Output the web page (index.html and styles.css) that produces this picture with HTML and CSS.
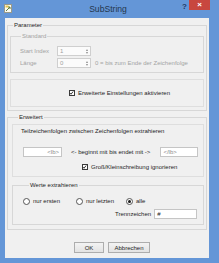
FILE: index.html
```html
<!DOCTYPE html>
<html>
<head>
<meta charset="utf-8">
<link rel="stylesheet" href="styles.css">
</head>
<body>
<div class="win">
  <div class="titlebar">
    <svg class="appicon" width="8" height="9" viewBox="0 0 8 9">
      <rect x="0.5" y="0.5" width="7" height="8" fill="#fbfbf2" stroke="#9a9a8a"/>
      <rect x="1.5" y="1.5" width="3" height="2" fill="#e9c44a"/>
      <path d="M2 7 L6 3 M4 3 H6 V5" stroke="#5f7f3a" stroke-width="1" fill="none"/>
    </svg>
    <div class="title">SubString</div>
    <div class="help">?</div>
    <div class="close">×</div>
  </div>
  <div class="client">
    <fieldset class="gb param">
      <legend>Parameter</legend>
      <fieldset class="gb std">
        <legend class="dis">Standard</legend>
        <div class="frow">
          <span class="flabel dis">Start Index</span>
          <span class="spin"><span class="val">1</span><span class="arrows"><i class="up"></i><i class="dn"></i></span></span>
        </div>
        <div class="frow r2">
          <span class="flabel dis">Länge</span>
          <span class="spin"><span class="val">0</span><span class="arrows"><i class="up"></i><i class="dn"></i></span></span>
          <span class="hint dis">0 = bis zum Ende der Zeichenfolge</span>
        </div>
      </fieldset>
      <div class="panel chkpanel">
        <span class="chk"><svg width="6" height="6" viewBox="0 0 6 6"><path d="M1 3 L2.4 4.5 L5 1.2" stroke="#222" stroke-width="1.1" fill="none"/></svg></span>
        <span>Erweiterte Einstellungen aktivieren</span>
      </div>
    </fieldset>
    <fieldset class="gb ext">
      <legend>Erweitert</legend>
      <div class="panel sub">
        <div class="subtitle">Teilzeichenfolgen zwischen Zeichenfolgen extrahieren</div>
        <div class="lbrow">
          <span class="tb lb1">&lt;lb&gt;</span>
          <span class="mid">&lt;- beginnt mit bis endet mit -&gt;</span>
          <span class="tb lb2">&lt;/lb&gt;</span>
        </div>
        <div class="gkrow">
          <span class="chk"><svg width="6" height="6" viewBox="0 0 6 6"><path d="M1 3 L2.4 4.5 L5 1.2" stroke="#222" stroke-width="1.1" fill="none"/></svg></span>
          <span>Groß/Kleinschreibung ignorieren</span>
        </div>
      </div>
      <fieldset class="gb werte">
        <legend>Werte extrahieren</legend>
        <div class="radios">
          <span class="ritem"><span class="radio"></span>nur ersten</span>
          <span class="ritem"><span class="radio"></span>nur letzten</span>
          <span class="ritem"><span class="radio on"></span>alle</span>
        </div>
        <div class="trow">
          <span>Trennzeichen</span>
          <span class="tb tz">#</span>
        </div>
      </fieldset>
    </fieldset>
    <div class="buttons">
      <span class="btn ok">OK</span>
      <span class="btn cancel">Abbrechen</span>
    </div>
  </div>
</div>
</body>
</html>
```
FILE: styles.css
```css
* { box-sizing: border-box; }
html, body { margin: 0; padding: 0; }
body {
  width: 219px; height: 263px; overflow: hidden;
  background: #6496d7;
  font-family: "Liberation Sans", Arial, sans-serif;
  font-size: 6px; line-height: 8px; color: #1e1e1e;
}
.win {
  width: 219px; height: 263px;
  display: flex; flex-direction: column;
  padding: 0 10px 5px 5px;
}
.titlebar {
  height: 18px; margin: 0 -10px 0 -5px;
  display: flex; align-items: flex-start;
}
.appicon { margin: 4px 0 0 4px; flex: none; }
.title {
  flex: 1; text-align: center; padding-left: 24px;
  font-size: 8.6px; line-height: 10px; margin-top: 4px;
  color: #24364d;
}
.help {
  width: 9px; font-size: 8px; font-weight: bold; line-height: 10px;
  color: #1d3a63; margin-top: 2px; text-align: center;
}
.close {
  width: 21px; height: 10px; margin: 0 9px 0 0;
  background: #c8473f; color: #fff; font-weight: bold;
  font-size: 8px; line-height: 10px; text-align: center;
}
.client {
  flex: 1; background: #f0f0f0;
  display: flex; flex-direction: column;
  padding: 3px 2px 0 2px;
}
.gb {
  margin: 0; min-width: 0;
  border: 1px solid #d7d7d7;
}
.gb > legend { padding: 0 1px; line-height: 8px; }
.dis { color: #a3a3a3; }
.param { padding: 3px 2px 3px 2px; }
.param > legend { margin-left: 3px; }
.std { padding: 6px 8px 4px 9px; }
.std > legend { margin-left: 1px; }
.frow { display: flex; align-items: center; height: 10px; }
.frow.r2 { margin-top: 2px; }
.flabel { width: 37px; }
.spin {
  width: 34px; height: 10px; border: 1px solid #cfcfcf; background: #fbfbfb;
  display: flex; align-items: center; justify-content: space-between;
  padding: 0 1px 0 2px; color: #a0a0a0;
}
.arrows { display: flex; flex-direction: column; gap: 1px; width: 5px; align-items: center; }
.arrows i { display: block; width: 0; height: 0; border-left: 1.5px solid transparent; border-right: 1.5px solid transparent; }
.arrows .up { border-bottom: 2px solid #8a8a8a; }
.arrows .dn { border-top: 2px solid #8a8a8a; }
.hint { margin-left: 4px; }
.panel { border: 1px solid #dedede; }
.chkpanel {
  margin-top: 6px; height: 28px;
  display: flex; align-items: center; gap: 3px;
  padding-left: 58px;
}
.chk {
  width: 6px; height: 6px; border: 1px solid #3a3a3a; background: #fff;
  display: inline-flex; flex: none; position: relative;
}
.chk svg { margin: -1px 0 0 -1px; }
.ext { margin-top: 2px; padding: 3px 2px 4px 4px; }
.ext > legend { margin-left: 6px; }
.sub { padding: 2px 3px 5px 8px; }
.lbrow { display: flex; align-items: center; margin: 12px 0 0 2px; height: 10px; }
.tb {
  height: 10px; border: 1px solid #c5c5c5; background: #fff;
  display: flex; align-items: center; padding: 0 2px;
}
.lb1 { width: 39px; justify-content: flex-end; color: #8a8a8a; }
.mid { margin-left: 9px; }
.lb2 { width: 38px; margin-left: 10px; color: #8a8a8a; }
.gkrow { display: flex; align-items: center; gap: 3px; margin: 6px 0 0 61px; height: 8px; }
.werte { margin-top: 4px; padding: 8px 3px 5px 10px; }
.werte > legend { margin-left: 6px; }
.radios { display: flex; align-items: center; height: 8px; }
.ritem { display: flex; align-items: center; gap: 3px; }
.ritem:nth-child(1) { width: 53px; }
.ritem:nth-child(2) { width: 50px; }
.radio {
  width: 7px; height: 7px; border-radius: 50%; border: 1px solid #555; background: #fff;
  display: flex; align-items: center; justify-content: center;
}
.radio.on::after { content: ""; width: 3px; height: 3px; border-radius: 50%; background: #1a1a1a; }
.trow { display: flex; align-items: center; margin: 4px 0 0 92px; height: 10px; gap: 3px; }
.tz { width: 43px; color: #222; }
.buttons { display: flex; gap: 4px; margin-top: 12px; padding-left: 67px; }
.btn {
  height: 11px; border: 1px solid #adadad;
  background: linear-gradient(#f3f3f3, #e3e3e3);
  display: flex; align-items: center; justify-content: center;
}
.ok { width: 30px; }
.cancel { width: 42px; }
```
